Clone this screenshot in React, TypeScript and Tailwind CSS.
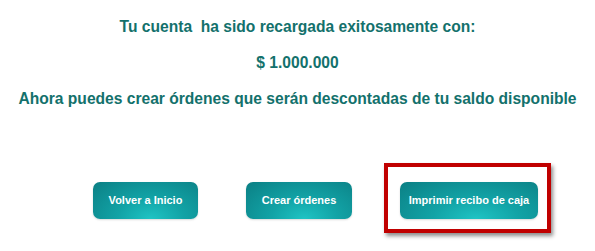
import React from "react";

const btn =
  "h-[37px] rounded-[7px] text-white font-bold text-[11px] flex items-center justify-center bg-[radial-gradient(ellipse_at_55%_100%,#1fc4c4_0%,#12a3a6_40%,#0b7f84_100%)] shadow-[0_1px_2px_rgba(0,0,0,0.15)]";

export default function App() {
  return (
    <div className="w-[595px] h-[251px] bg-white relative overflow-hidden" style={{ fontFamily: '"Liberation Sans", Arial, sans-serif' }}>
      <div className="flex flex-col items-center text-[#13716c] font-bold text-[15.6px] pt-[17px]">
        <div className="leading-[19px]">Tu cuenta&nbsp; ha sido recargada exitosamente con:</div>
        <div className="leading-[19px] mt-[17px]">$ 1.000.000</div>
        <div className="leading-[19px] mt-[17px]">Ahora puedes crear órdenes que serán descontadas de tu saldo disponible</div>
      </div>
      <div className="flex items-start pl-[93px] gap-[48px] mt-[74px]">
        <button className={`${btn} w-[105px]`}>Volver a Inicio</button>
        <button className={`${btn} w-[106px]`}>Crear órdenes</button>
        <div className="relative">
          <button className={`${btn} w-[138px]`}>Imprimir recibo de caja</button>
          <div className="absolute left-[-16px] top-[-19px] right-[-13px] bottom-[-14px] border-[4px] border-[#c00000] shadow-[2px_3px_4px_rgba(0,0,0,0.45)]" />
        </div>
      </div>
    </div>
  );
}
